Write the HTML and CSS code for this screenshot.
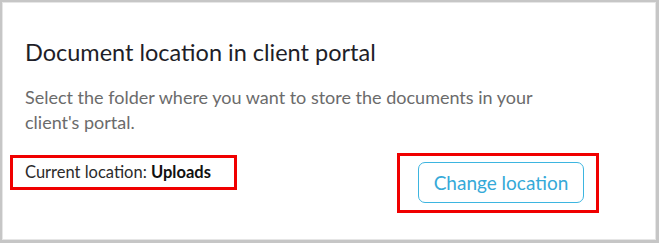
FILE: index.html
```html
<!DOCTYPE html>
<html lang="en">
<head>
    <meta charset="UTF-8">
    <meta name="viewport" content="width=device-width, initial-scale=1.0">
    <title>Document location</title>
    <link rel="stylesheet" href="styles.css">
</head>
<body>

<div class="frame">
    <div class="card">
        <h2 class="card-title">Document location in client portal</h2>
        <p class="card-text">Select the folder where you want to store the documents in your client's portal.</p>

        <div class="location-row">
            <div class="mark mark-current">
                <span class="current">Current location: <b>Uploads</b></span>
            </div>
            <div class="mark mark-button">
                <button type="button" class="btn-outline">Change location</button>
            </div>
        </div>
    </div>
</div>

</body>
</html>
```

FILE: styles.css
```css
body {
    margin: 0;
    padding: 0;
    font-family: Lato, "Open Sans", Arial, sans-serif;
    background-color: #ffffff;
}
.frame {
    width: 659px;
    height: 243px;
    box-sizing: border-box;
    border-style: solid;
    border-color: #c6c6c6;
    border-width: 2px 3px 3px 2px;
    box-shadow: inset 1px 1px 0 #e6e6e6, inset -1px -1px 0 #e6e6e6;
}
.card {
    padding: 35px 20px 0 23px;
}
.card-title {
    margin: 0;
    font-size: 23.5px;
    font-weight: normal;
    line-height: 30px;
    color: #1e1e28;
}
.card-text {
    margin: 18px 0 0;
    width: 545px;
    font-size: 18px;
    line-height: 25px;
    color: #6b6b6b;
}
.location-row {
    display: flex;
    align-items: flex-start;
    gap: 160px;
    margin: 18px 0 0 -15px;
}
.mark {
    border: 3px solid #f00000;
}
.mark-current {
    box-sizing: border-box;
    width: 227px;
    height: 35px;
    padding-left: 12px;
    margin-top: 2px;
}
.current {
    display: block;
    font-size: 16.5px;
    line-height: 29px;
    color: #2b2b2b;
}
.current b {
    font-weight: bold;
    color: #111;
}
.mark-button {
    padding: 6px 12px 7px 18px;
}
.btn-outline {
    width: 166px;
    height: 41px;
    padding: 0;
    border: 1px solid #3db5e0;
    border-radius: 7px;
    background-color: #ffffff;
    color: #35a9d8;
    font-family: inherit;
    font-size: 19px;
    cursor: pointer;
}
```
